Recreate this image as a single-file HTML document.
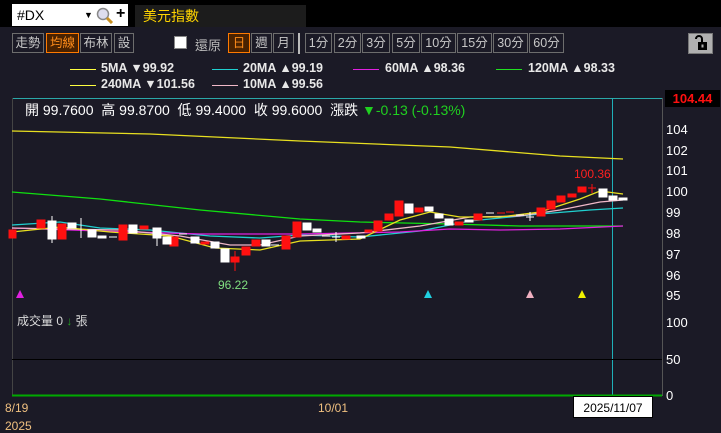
<!DOCTYPE html>
<html><head><meta charset="utf-8"><style>
body{margin:0;width:721px;height:426px;overflow:hidden;background:#1b1a26;font-family:"Liberation Sans","Noto Sans CJK TC",sans-serif;position:relative}
.a{position:absolute}
.btn{position:absolute;top:33px;height:20px;border:1px solid #6d6d6d;color:#c8c8c8;font-size:12.5px;line-height:19px;text-align:center;box-sizing:border-box}
.on{border-color:#ff7a00;background:#4a2200;color:#ff8c1a}
.lg{position:absolute;color:#e8e8e8;font-size:12.5px;font-weight:bold}
.ln{position:absolute;height:1px;width:26px}
</style></head><body>
<div class="a" style="left:0;top:0;width:721px;height:27px;background:#000"></div>
<div class="a" style="left:12px;top:4px;width:116px;height:22px;background:#fff;font-size:14px;line-height:22px;color:#000;padding-left:5px;box-sizing:border-box">#DX<span class="a" style="left:72px;top:0;font-size:9px">▼</span>
<svg class="a" style="left:84px;top:3px" width="18" height="17"><circle cx="7" cy="7" r="5.5" fill="#dde" stroke="#888" stroke-width="1.5"/><line x1="11" y1="11" x2="16" y2="16" stroke="#c89020" stroke-width="3"/></svg>
<span class="a" style="left:104px;top:-1px;font-weight:bold;font-size:16px">+</span></div>
<div class="a" style="left:135px;top:5px;width:171px;height:22px;background:#1c1c1c;color:#ffd400;font-size:14px;line-height:22px;padding-left:8px;box-sizing:border-box">美元指數</div>
<div class="btn" style="left:12px;width:32px">走勢</div>
<div class="btn on" style="left:46px;width:33px">均線</div>
<div class="btn" style="left:80px;width:32px">布林</div>
<div class="btn" style="left:114px;width:20px">設</div>
<div class="a" style="left:174px;top:36px;width:13px;height:13px;background:#fff;border:1px solid #888;box-sizing:border-box"></div>
<div class="a" style="left:195px;top:35px;color:#bbb;font-size:13px">還原</div>
<div class="btn on" style="left:228px;width:22px">日</div>
<div class="btn" style="left:251px;width:21px">週</div>
<div class="btn" style="left:273px;width:21px">月</div>
<div class="a" style="left:298px;top:33px;width:2px;height:21px;background:#bbb"></div>
<div class="btn" style="left:305px;width:27px">1分</div>
<div class="btn" style="left:334px;width:27px">2分</div>
<div class="btn" style="left:362px;width:28px">3分</div>
<div class="btn" style="left:392px;width:28px">5分</div>
<div class="btn" style="left:421px;width:35px">10分</div>
<div class="btn" style="left:457px;width:35px">15分</div>
<div class="btn" style="left:493px;width:35px">30分</div>
<div class="btn" style="left:529px;width:35px">60分</div>
<div class="a" style="left:688px;top:33px;width:25px;height:21px;background:#b0b0b0;border:1px solid #777;box-sizing:border-box"></div>
<svg class="a" style="left:693px;top:35px" width="16" height="17"><path d="M9 7 V4 a3 3 0 0 0 -6 0" fill="none" stroke="#000" stroke-width="2"/><rect x="5" y="7" width="9" height="8" fill="#000"/><rect x="8.5" y="9.5" width="2" height="3" fill="#b0b0b0"/></svg>
<div class="ln" style="left:70px;top:69px;background:#ffff40"></div><div class="lg" style="left:101px;top:61px">5MA ▼99.92</div>
<div class="ln" style="left:212px;top:69px;background:#20d0d0"></div><div class="lg" style="left:243px;top:61px">20MA ▲99.19</div>
<div class="ln" style="left:353px;top:69px;background:#e020e0"></div><div class="lg" style="left:385px;top:61px">60MA ▲98.36</div>
<div class="ln" style="left:496px;top:69px;background:#20e020"></div><div class="lg" style="left:528px;top:61px">120MA ▲98.33</div>
<div class="ln" style="left:70px;top:85px;background:#ffff40"></div><div class="lg" style="left:101px;top:77px">240MA ▼101.56</div>
<div class="ln" style="left:212px;top:85px;background:#f0b8c8"></div><div class="lg" style="left:243px;top:77px">10MA ▲99.56</div>
<svg class="a" style="left:0;top:0" width="721" height="426">
<line x1="12" y1="98.5" x2="662" y2="98.5" stroke="#2aa8a8"/>
<line x1="12.5" y1="98" x2="12.5" y2="396" stroke="#444"/>
<line x1="662.5" y1="98" x2="662.5" y2="396" stroke="#555"/>
<line x1="612.5" y1="98" x2="612.5" y2="396" stroke="#1fb0b8"/>
<line x1="12" y1="359.5" x2="662" y2="359.5" stroke="#000"/>
<line x1="12" y1="395.5" x2="662" y2="395.5" stroke="#0a0" stroke-width="2"/>
<g fill="none" stroke-width="1.3">
<polyline stroke="#e8e020" points="12,131 150,134 300,141 450,147 560,156 623,159"/>
<polyline stroke="#10e010" points="12,192 100,199 200,210 300,219 360,222 450,224 520,226 623,226"/>
<polyline stroke="#20d0d0" points="12,225 60,222 100,228 150,230 210,236 260,238 300,235 360,237 420,231 470,221 540,214 590,210 623,208"/>
<polyline stroke="#e020e0" points="12,228 100,231 200,234 300,234 400,232 450,229 500,230 560,229 623,226"/>
<polyline stroke="#f0b8c8" points="12,228 60,229 120,230 180,236 230,245 260,245 300,236 360,233 420,226 470,217 520,216 560,210 600,202 623,200"/>
<polyline stroke="#e8e020" points="12,232 60,227 110,232 170,236 215,248 260,250 300,241 360,239 400,220 430,212 460,217 500,217 540,212 580,199 600,191 623,194"/>
</g>
<g fill="#ff1010" stroke="#ff1010">
<rect x="9" y="230" width="7" height="8"/>
<rect x="37" y="220" width="8" height="8"/><rect x="58" y="224" width="8" height="15"/><rect x="119" y="225" width="8" height="15"/><rect x="140" y="226" width="8" height="3"/>
<rect x="170" y="237" width="8" height="9"/><rect x="201" y="242" width="8" height="2"/><rect x="231" y="257" width="8" height="5"/><line x1="235" y1="251" x2="235" y2="271"/><rect x="242" y="247" width="8" height="8"/><rect x="252" y="240" width="8" height="6"/>
<rect x="282" y="236" width="8" height="13"/><rect x="293" y="222" width="8" height="15"/><rect x="342" y="236" width="8" height="3"/>
<rect x="365" y="230" width="7" height="2"/><rect x="374" y="221" width="8" height="10"/><rect x="385" y="214" width="8" height="6"/><rect x="395" y="201" width="8" height="15"/><rect x="415" y="208" width="8" height="4"/>
<rect x="455" y="222" width="8" height="3"/><rect x="474" y="214" width="8" height="6"/><line x1="497" y1="213" x2="505" y2="213"/><line x1="506" y1="212" x2="514" y2="212"/>
<rect x="537" y="208" width="8" height="8"/><rect x="547" y="201" width="8" height="8"/><rect x="557" y="196" width="8" height="6"/><rect x="568" y="194" width="8" height="3"/><rect x="578" y="187" width="8" height="5"/><line x1="588" y1="188" x2="596" y2="188"/><line x1="592" y1="184" x2="592" y2="193"/>
</g>
<g fill="#fff" stroke="#fff">
<rect x="48" y="221" width="8" height="18"/><line x1="52" y1="216" x2="52" y2="243"/><rect x="68" y="223" width="8" height="5"/><line x1="81" y1="218" x2="81" y2="238"/><rect x="88" y="230" width="8" height="7"/><rect x="98" y="236" width="8" height="2"/><line x1="109" y1="237" x2="117" y2="237"/>
<rect x="129" y="225" width="8" height="8"/><rect x="153" y="228" width="8" height="10"/><line x1="157" y1="238" x2="157" y2="246"/><rect x="163" y="237" width="8" height="7"/><line x1="179" y1="234" x2="187" y2="234"/><rect x="191" y="237" width="8" height="6"/><rect x="211" y="242" width="8" height="6"/><rect x="221" y="249" width="8" height="13"/>
<rect x="262" y="240" width="8" height="6"/><line x1="271" y1="245" x2="279" y2="245"/><rect x="303" y="223" width="8" height="7"/><rect x="313" y="229" width="8" height="3"/><line x1="322" y1="236" x2="330" y2="236"/><line x1="332" y1="237" x2="340" y2="237"/><line x1="336" y1="232" x2="336" y2="242"/><rect x="357" y="236" width="8" height="2"/>
<rect x="405" y="204" width="8" height="9"/><rect x="425" y="207" width="8" height="4"/><rect x="435" y="214" width="8" height="4"/><rect x="445" y="219" width="8" height="6"/><rect x="465" y="220" width="8" height="2"/><line x1="486" y1="213" x2="494" y2="213"/><line x1="516" y1="215" x2="524" y2="215"/><line x1="526" y1="217" x2="534" y2="217"/><line x1="530" y1="212" x2="530" y2="221"/>
<rect x="599" y="189" width="8" height="8"/><rect x="609" y="196" width="8" height="4"/><rect x="619" y="198" width="8" height="2"/>
</g>
<polygon points="16,298 20,290 24,298" fill="#e020e0"/>
<polygon points="424,298 428,290 432,298" fill="#20d0e0"/>
<polygon points="526,298 530,290 534,298" fill="#f0b0c0"/>
<polygon points="578,298 582,290 586,298" fill="#f0f000"/>
<g font-family="Liberation Sans,sans-serif" font-size="13" fill="#fff">
<text x="666" y="134">104</text><text x="666" y="155">102</text><text x="666" y="175">101</text><text x="666" y="196">100</text><text x="666" y="217">99</text><text x="666" y="238">98</text><text x="666" y="259">97</text><text x="666" y="280">96</text><text x="666" y="300">95</text>
<text x="666" y="327">100</text><text x="666" y="364">50</text><text x="666" y="400">0</text>
</g>
<text x="218" y="289" font-size="12" fill="#80e080" font-family="Liberation Sans,sans-serif">96.22</text>
<text x="574" y="178" font-size="12" fill="#ff2020" font-family="Liberation Sans,sans-serif">100.36</text>
</svg>
<div class="a" style="left:665px;top:90px;width:55px;height:17px;background:#000;color:#ff1010;font-weight:bold;font-size:13px;line-height:17px;text-align:center">104.44</div>
<div class="a" style="left:25px;top:100px;color:#fff;font-size:14px;white-space:nowrap">開 99.7600&nbsp; 高 99.8700&nbsp; 低 99.4000&nbsp; 收 99.6000&nbsp; 漲跌 <span style="color:#20d020">▼-0.13 (-0.13%)</span></div>
<div class="a" style="left:17px;top:312px;color:#ddd;font-size:12px">成交量 0 <span style="color:#20a020">↓</span> 張</div>
<div class="a" style="left:5px;top:401px;color:#f0c080;font-size:12px">8/19</div>
<div class="a" style="left:318px;top:401px;color:#f0c080;font-size:12px">10/01</div>
<div class="a" style="left:5px;top:419px;color:#f0c080;font-size:12px">2025</div>
<div class="a" style="left:573px;top:396px;width:80px;height:22px;background:#fff;border:1px solid #000;color:#000;font-size:12px;line-height:22px;text-align:center;box-sizing:border-box">2025/11/07</div>
</body></html>
